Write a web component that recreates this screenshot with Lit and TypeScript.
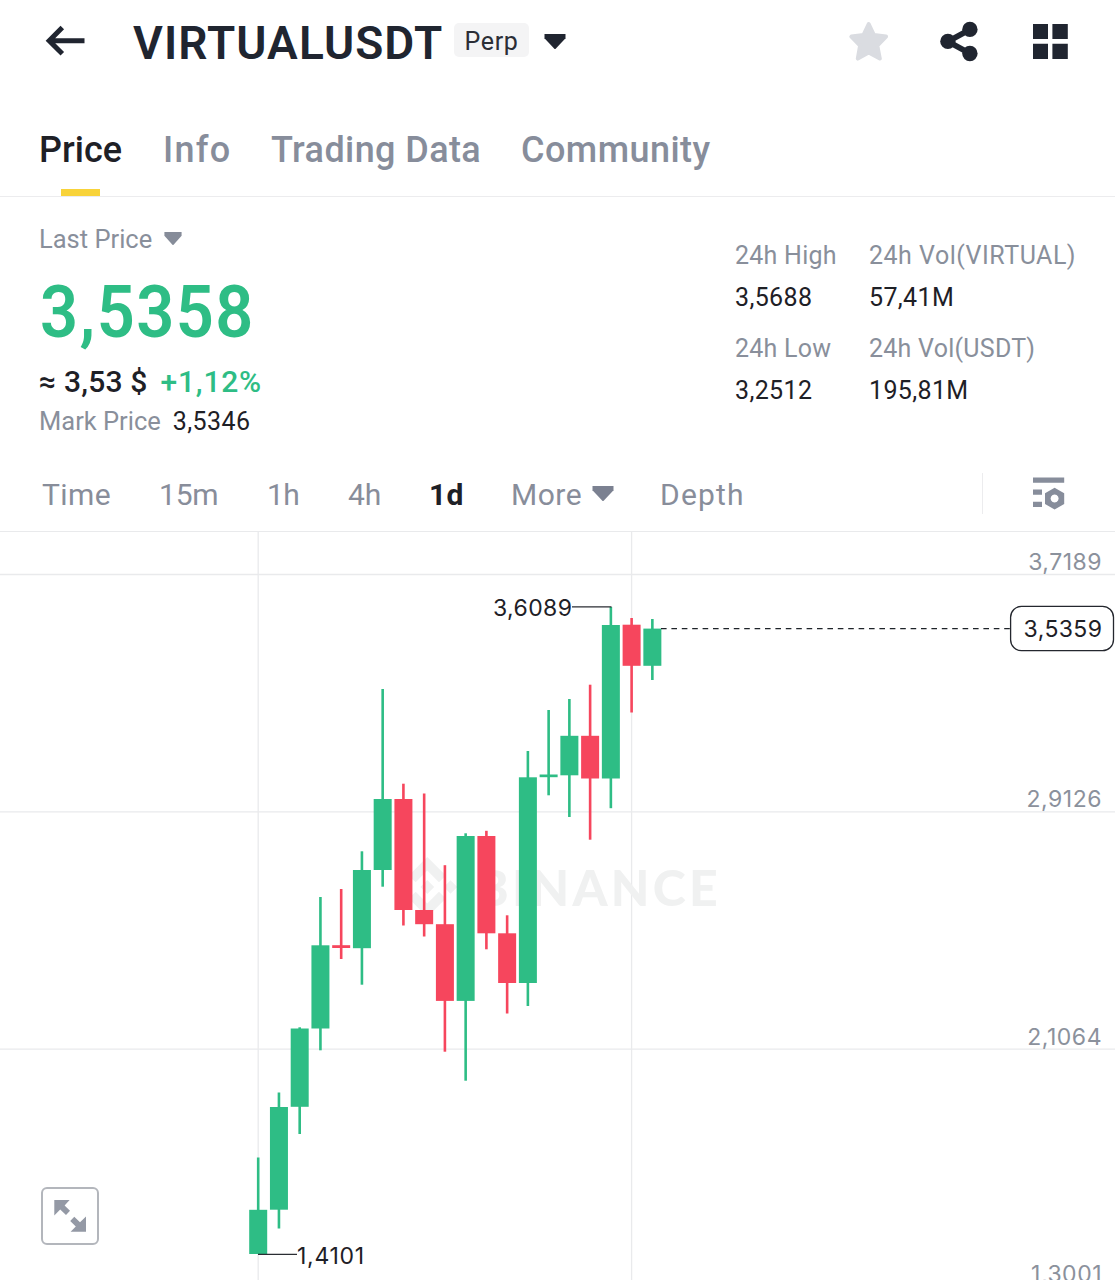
import { LitElement, html, svg, css } from "lit";
import { customElement, state } from "lit/decorators.js";
import { classMap } from "lit/directives/class-map.js";

/** body top, body bottom, wick top, wick bottom, rising */
type Candle = [number, number, number, number, boolean];

const CANDLES: Candle[] = [
  [1209.8, 1254, 1157.5, 1254, true],
  [1107, 1209.7, 1092.5, 1228.5, true],
  [1028.5, 1106.8, 1027.3, 1134, true],
  [945.3, 1028.5, 897, 1050.3, true],
  [945.2, 948, 889, 959, false],
  [870, 948.2, 851.3, 984.7, true],
  [799, 870, 689, 886.7, true],
  [799, 910, 783.7, 925.5, false],
  [910, 924.2, 793.5, 936.5, false],
  [924.2, 1000.9, 865.2, 1051.7, false],
  [836, 1000.9, 833.3, 1080.7, true],
  [836, 933.3, 830.8, 949.3, false],
  [933.3, 983, 915.3, 1013.5, false],
  [777.3, 983, 751, 1006, true],
  [774.5, 777.2, 710, 795.3, true],
  [735.8, 775.3, 699, 817, true],
  [735.8, 778.5, 684.7, 839.7, false],
  [625, 778.5, 607, 808.2, true],
  [624.7, 665.8, 618, 712.5, false],
  [628.6, 665.8, 619, 680, true],
];
const FIRST_X = 258.2;
const STEP = 20.745;
const BODY = 18;

@customElement("caret-down")
class CaretDown extends LitElement {
  static styles = css`
    :host { display: block; }
    svg { display: block; width: 100%; height: 100%; }
  `;
  render() {
    return html`<svg viewBox="0 0 22 15" preserveAspectRatio="none">
      <path d="M.5 0H21.5V4.2L11.7 14.7Q11 15.3 10.3 14.7L.5 4.2Z" fill="currentColor" />
    </svg>`;
  }
}

@customElement("price-chart")
class PriceChart extends LitElement {
  static styles = css`
    :host { display: block; position: relative; }
    svg { display: block; }
    .grid { stroke: #e9eaec; stroke-width: 1.3; }
    .axis, .mark { font: 400 23px Inter, sans-serif; }
    .axis { fill: #8b919c; text-anchor: end; letter-spacing: 0.5px; }
    .mark { fill: #1e2026; letter-spacing: 0.4px; }
    .low { letter-spacing: 0.7px; }
    .lead { stroke: #2a2d33; stroke-width: 1.3; }
    .dash { stroke: #1e2329; stroke-width: 1.3; stroke-dasharray: 5.6 4.8; }
    .tag { fill: #fff; stroke: #24272e; stroke-width: 1.3; }
    .wm { fill: #f0f1f1; }
    .wmtext { font: 900 50px Lato, sans-serif; letter-spacing: 3.3px; }
    .up { fill: #2ebd85; }
    .down { fill: #f6465d; }
    .expand {
      position: absolute; left: 41px; top: 655px; width: 58px; height: 58px; box-sizing: border-box;
      border: 2px solid #b3b6bc; border-radius: 6px; background: #fff; padding: 0;
    }
    .expand svg { width: 54px; height: 54px; }
  `;
  render() {
    return html`
      <svg width="1115" height="748" viewBox="0 532 1115 748">
        ${[574.5, 811.8, 1049.2].map((y) => svg`<line class="grid" x1="0" x2="1115" y1=${y} y2=${y} />`)}
        ${[258.2, 631.6].map((x) => svg`<line class="grid" y1="532" y2="1280" x1=${x} x2=${x} />`)}
        <g class="wm">
          <g transform="translate(397.3 857) scale(.474)">
            <path d="M38.73 53.2 63.32 28.62 87.92 53.22 102.22 38.91 63.32 0 24.43 38.9Z" />
            <path d="M0 63.31 14.3 49 28.61 63.31 14.3 77.61Z" />
            <path d="M38.73 73.41 63.32 98 87.92 73.4 102.23 87.69 63.32 126.6 24.41 87.72Z" />
            <path d="M98 63.31 112.3 49 126.61 63.3 112.3 77.62Z" />
            <path d="M77.83 63.3 63.32 48.78 48.8 63.3 63.32 77.82Z" />
          </g>
          <text class="wmtext" x="475.5" y="906">BINANCE</text>
        </g>
        ${CANDLES.map(([top, bottom, high, low, up], i) => {
          const x = FIRST_X + i * STEP;
          return svg`<g class=${up ? "up" : "down"}>
            <rect x=${x - 1.3} y=${high} width="2.6" height=${low - high} />
            <rect x=${x - BODY / 2} y=${top} width=${BODY} height=${bottom - top} />
          </g>`;
        })}
        <line class="lead" x1="572" x2="611.5" y1="606.8" y2="606.8" />
        <line class="lead" x1="258" x2="297" y1="1254.3" y2="1254.3" />
        <text class="mark" x="493" y="616">3,6089</text>
        <text class="mark low" x="297" y="1263.5">1,4101</text>
        <line class="dash" x1="661" x2="1010" y1="628.6" y2="628.6" />
        <rect class="tag" x="1010.6" y="606.3" width="102.9" height="44.4" rx="11" />
        <text class="mark" x="1023.6" y="637.3">3,5359</text>
        <text class="axis" x="1102" y="570">3,7189</text>
        <text class="axis" x="1102" y="807.3">2,9126</text>
        <text class="axis" x="1102" y="1045">2,1064</text>
        <text class="axis" x="1102" y="1282">1,3001</text>
      </svg>
      <button class="expand" aria-label="Expand chart">
        <svg viewBox="43 1189 54 54" fill="#9499a5">
          <path d="M54.3 1200H69.6L64.6 1205.4 70 1210.8 66 1215 60.2 1209.4 54.3 1215.4Z" />
          <path d="M86 1231.8H70.6L75.8 1226.6 70.2 1221 74.3 1216.8 80 1222.3 86 1216.4Z" />
        </svg>
      </button>
    `;
  }
}

@customElement("app-root")
class AppRoot extends LitElement {
  @state() private tab = "Price";
  @state() private interval = "1d";

  static styles = css`
    :host {
      display: block; width: 1115px; height: 1280px; overflow: hidden; background: #fff;
      color: #1e2026; font-family: Roboto, sans-serif; white-space: nowrap;
    }
    header { display: flex; align-items: center; height: 84px; padding: 0 46px 0 45px; box-sizing: border-box; }
    .icon { display: block; flex: none; }
    h1 { margin: 2px 0 0 48px; width: 321px; font-size: 46px; line-height: 54px; font-weight: 600; letter-spacing: 1.05px; color: #202530; }
    .perp {
      width: 75px; height: 34px; margin-top: -4px; border-radius: 5px; background: #f4f4f5; color: #2b2e36;
      font-size: 25px; line-height: 37px; text-align: center; letter-spacing: 0.7px;
    }
    header caret-down { width: 22px; height: 15px; margin: -2px 0 0 15px; color: #202530; }
    .actions { display: flex; align-items: center; margin-left: auto; }
    .share { margin-left: 51px; }
    .apps { margin-left: 54px; }

    nav { display: flex; height: 113px; box-sizing: border-box; padding-left: 39px; border-bottom: 1.4px solid #ececee; }
    .tab { display: flex; flex-direction: column; color: #878d9b; font-size: 36px; font-weight: 500; line-height: 44px; padding-top: 44px; box-sizing: border-box; }
    .tab.on { color: #1e2026; }
    .tab i { display: block; width: 39px; height: 7px; margin: auto auto 0 22px; background: #f8d33a; }
    .t0 { width: 124px; }
    .t1 { width: 108px; letter-spacing: 1.3px; }
    .t2 { width: 250px; letter-spacing: 0.4px; }
    .t3 { letter-spacing: 0.45px; }

    .summary { display: flex; justify-content: space-between; height: 260px; padding: 0 38px 0 39px; box-sizing: border-box; }
    .muted { color: #898f9b; }
    .left { padding-top: 22px; }
    .row { display: flex; align-items: center; font-size: 25.5px; }
    .last { height: 40px; }
    .last caret-down { width: 18px; height: 13px; margin: -1px 0 0 12px; color: #868c99; }
    .price {
      height: 106px; line-height: 108px; font-size: 72.5px; font-weight: 600; color: #2ebd85; letter-spacing: 1.6px;
      transform: scaleX(0.92); transform-origin: 0 50%; padding-left: 1px;
    }
    .approx { height: 33px; font-size: 30px; font-weight: 500; letter-spacing: 0.2px; }
    .approx b { margin-left: 13px; font-weight: 500; color: #2ebd85; letter-spacing: 0.8px; }
    .mark { height: 46px; }
    .mark b { margin-left: 12px; font-size: 25px; font-weight: 400; letter-spacing: 0.4px; color: #1e2026; }

    .stats { display: grid; grid-template-columns: 134px 208px; grid-auto-rows: 84px; row-gap: 9px; padding-top: 37px; font-size: 25px; }
    .stats div { letter-spacing: 0.25px; }
    .stats .wide { letter-spacing: 0.5px; }
    .label { display: block; line-height: 44px; }
    .value { display: block; line-height: 40px; letter-spacing: 0.36px; }

    .intervals { display: flex; align-items: center; height: 75px; box-sizing: border-box; border-bottom: 1.4px solid #e9eaec; padding: 0 50px 0 42px; font-size: 30px; color: #888d9a; }
    .iv { display: flex; align-items: center; }
    .iv.on { color: #1e2026; font-weight: 700; }
    .iv caret-down { width: 22px; height: 15px; margin: -1px 0 0 10px; color: #7b8191; }
    .i0 { width: 117px; letter-spacing: 0.4px; }
    .i1 { width: 108px; letter-spacing: -0.2px; }
    .i2 { width: 81px; letter-spacing: -0.6px; }
    .i3 { width: 81px; }
    .i4 { width: 82px; letter-spacing: 0.3px; }
    .i5 { width: 149px; letter-spacing: 0.5px; }
    .i6 { letter-spacing: 1.2px; }
    .sep { width: 1.3px; height: 41px; margin: -1px 50px 0 auto; background: #ececee; }
  `;

  private stat(label: string, value: string, wide = false) {
    return html`<div>
      <span class=${classMap({ label: true, muted: true, wide })}>${label}</span>
      <span class="value">${value}</span>
    </div>`;
  }

  render() {
    const tabs = ["Price", "Info", "Trading Data", "Community"];
    const intervals = ["Time", "15m", "1h", "4h", "1d", "More", "Depth"];
    return html`
      <header>
        <svg class="icon" width="40" height="84" viewBox="45 0 40 84" fill="none" stroke="#202530" stroke-width="5">
          <path d="M84.5 40.7H49M62.3 27.6 49.2 40.7 62.3 53.8" />
        </svg>
        <h1>VIRTUALUSDT</h1>
        <span class="perp">Perp</span>
        <caret-down></caret-down>
        <div class="actions">
          <svg class="icon" width="40" height="84" viewBox="849 0 40 84">
            <path fill="#dadce1" stroke="#dadce1" stroke-width="4" stroke-linejoin="round"
              d="M868.7 24 873.8 34.9 886 36.6 877.3 45.6 879.8 58.6 868.7 52.6 857.8 58.6 860.1 45.6 851.4 36.6 863.6 34.9Z" />
          </svg>
          <svg class="icon share" width="38" height="84" viewBox="939.5 0 38 84" fill="#202530">
            <path d="M969.5 29.5 947.5 41.5 969.5 53.5" fill="none" stroke="#202530" stroke-width="5.8" />
            <circle cx="947.4" cy="41.4" r="7.7" />
            <circle cx="969.4" cy="29.4" r="7.7" />
            <circle cx="969.4" cy="53.5" r="7.7" />
          </svg>
          <svg class="icon apps" width="37" height="84" viewBox="1032 0 37 84" fill="#202530">
            <path d="M1033 24h15v15h-15zM1052.4 24h15.4v15h-15.4zM1033 43.7h15v15.3h-15zM1052.4 43.7h15.4v15.3h-15.4z" />
          </svg>
        </div>
      </header>
      <nav>
        ${tabs.map((t, i) => html`<div class="tab t${i} ${t === this.tab ? "on" : ""}" @click=${() => (this.tab = t)}>
          ${t}${t === this.tab ? html`<i></i>` : ""}
        </div>`)}
      </nav>
      <section class="summary">
        <div class="left">
          <div class="row last muted">Last Price<caret-down></caret-down></div>
          <div class="price">3,5358</div>
          <div class="row approx">≈ 3,53 $<b>+1,12%</b></div>
          <div class="row mark muted">Mark Price<b>3,5346</b></div>
        </div>
        <div class="stats">
          ${this.stat("24h High", "3,5688")}
          ${this.stat("24h Vol(VIRTUAL)", "57,41M", true)}
          ${this.stat("24h Low", "3,2512")}
          ${this.stat("24h Vol(USDT)", "195,81M")}
        </div>
      </section>
      <div class="intervals">
        ${intervals.map((t, i) => html`<div class="iv i${i} ${t === this.interval ? "on" : ""}" @click=${() => (this.interval = t)}>
          ${t}${t === "More" ? html`<caret-down></caret-down>` : ""}
        </div>`)}
        <span class="sep"></span>
        <svg class="icon" width="32" height="34" viewBox="1033 477 32 34" fill="#878d9b">
          <path d="M1033 477.4h31.2v5.4H1033zM1033 489.5h9v5.2h-9zM1033 501.7h9v5.2h-9z" />
          <path fill-rule="evenodd" d="M1054.6 487.8 1064.2 493.2V504L1054.6 509.4 1045 504V493.2ZM1054.6 494.6a4 4 0 1 0 .01 0Z" />
        </svg>
      </div>
      <price-chart></price-chart>
    `;
  }
}
